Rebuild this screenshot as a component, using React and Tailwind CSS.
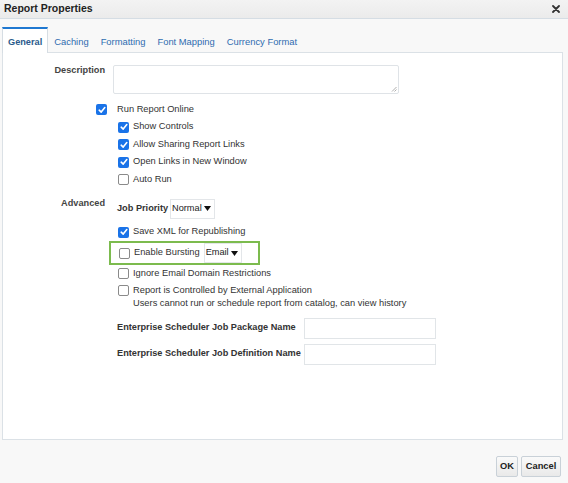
import React from "react"

const font = { fontFamily: '"Liberation Sans", Arial, sans-serif' }

function Check({ checked }) {
  if (checked) {
    return (
      <span className="flex h-[11px] w-[11px] shrink-0 items-center justify-center rounded-[2px] bg-[#1a73e8]">
        <svg width="8" height="8" viewBox="0 0 8 8" fill="none">
          <path d="M1.2 4.2 L3.2 6.1 L6.8 1.6" stroke="white" strokeWidth="1.6" strokeLinecap="round" strokeLinejoin="round" />
        </svg>
      </span>
    )
  }
  return <span className="block h-[11px] w-[11px] shrink-0 rounded-[2px] border border-[#8a8a8a] bg-white" />
}

function CheckRow({ checked, label, indent }) {
  return (
    <div className={`flex h-[17.5px] items-center ${indent ? "pl-[5px]" : ""}`}>
      <Check checked={checked} />
      <span className="ml-[4px] whitespace-nowrap text-[9.3px] text-[#333]">{label}</span>
    </div>
  )
}

function Select({ value }) {
  return (
    <span className="flex h-[20px] items-center border border-[#e3e6e9] bg-white pl-[1px] pr-[3px] text-[9.2px] text-[#222]">
      {value}
      <svg className="ml-[2px]" width="7" height="5" viewBox="0 0 7 5">
        <path d="M0 0 H7 L3.5 5 Z" fill="#111" />
      </svg>
    </span>
  )
}

export default function App() {
  const tabs = ["Caching", "Formatting", "Font Mapping", "Currency Format"]

  return (
    <div className="flex h-[483px] w-[568px] flex-col bg-[#f8f8f8]" style={font}>
      {/* Title bar */}
      <div className="flex h-[19px] items-center justify-between border-b border-[#d5dde4] bg-gradient-to-b from-[#f3f3f3] to-[#ebebeb] pl-[4px] pr-[8px]">
        <span className="text-[10.5px] font-bold text-[#222]">Report Properties</span>
        <svg width="8" height="8" viewBox="0 0 8 8">
          <path d="M1 1 L7 7 M7 1 L1 7" stroke="#333" strokeWidth="1.8" strokeLinecap="round" />
        </svg>
      </div>

      {/* Tabs */}
      <div className="mt-[8px] flex h-[25px] pl-[2px]">
        <div className="relative z-10 -mb-px flex items-center border-x border-t-2 border-x-[#d6dde3] border-t-[#1f78d1] bg-white px-[5px] pt-[4px] text-[9.2px] font-bold text-[#2b5b8c]">
          General
        </div>
        {tabs.map((t) => (
          <div key={t} className="flex items-center px-[6px] pt-[6px] text-[9.4px] text-[#2f6cb0]">
            {t}
          </div>
        ))}
      </div>

      {/* Panel */}
      <div className="ml-[2px] mr-[5px] h-[388px] border border-[#dbe1e6] bg-white pt-[12px]">
        {/* Description */}
        <div className="flex">
          <div className="w-[102px] text-right text-[9.2px] font-bold leading-[11px] text-[#444]">Description</div>
          <div className="relative ml-[8px] h-[29px] w-[286px] rounded-[2px] border border-[#dfe3e7] bg-white">
            <svg className="absolute bottom-[1px] right-[1px]" width="6" height="6" viewBox="0 0 6 6">
              <path d="M5.5 1 L1 5.5 M5.5 3.5 L3.5 5.5" stroke="#999" strokeWidth="0.8" />
            </svg>
          </div>
        </div>

        {/* Run report online */}
        <div className="mt-[7px] flex h-[17.5px] items-center">
          <div className="flex w-[104px] justify-end">
            <Check checked />
          </div>
          <span className="ml-[10px] text-[9.3px] text-[#333]">Run Report Online</span>
        </div>
        <div className="ml-[110px]">
          <CheckRow checked indent label="Show Controls" />
          <CheckRow checked indent label="Allow Sharing Report Links" />
          <CheckRow checked indent label="Open Links in New Window" />
          <CheckRow indent label="Auto Run" />
        </div>

        {/* Advanced */}
        <div className="mt-[10px] flex">
          <div className="-mt-[1px] w-[102px] text-right text-[9.2px] font-bold leading-[11px] text-[#444]">Advanced</div>
          <div className="ml-[8px] flex-1">
            <div className="flex h-[20px] items-center pl-[4px]">
              <span className="mr-[2px] text-[9.2px] font-bold text-[#333]">Job Priority</span>
              <Select value="Normal" />
            </div>
            <div className="mt-[5px]">
              <CheckRow checked indent label="Save XML for Republishing" />
            </div>
          </div>
        </div>

        <div className="ml-[106px] flex h-[24px] w-[151px] items-center border-2 border-[#7cbb4e] pl-[8px]">
          <Check />
          <span className="ml-[4px] mr-[4px] text-[9.3px] text-[#333]">Enable Bursting</span>
          <Select value="Email" />
        </div>

        <div className="ml-[110px]">
          <CheckRow indent label="Ignore Email Domain Restrictions" />
          <div className="flex items-start pl-[5px] pt-[1px]">
            <div className="pt-[1px]">
              <Check />
            </div>
            <div className="ml-[4px] text-[9.3px] leading-[13px] text-[#333]">
              <div>Report is Controlled by External Application</div>
              <div>Users cannot run or schedule report from catalog, can view history</div>
            </div>
          </div>
        </div>

        {/* Scheduler fields */}
        <div className="ml-[114px] mt-[8px] flex flex-col gap-[5px]">
          <div className="flex items-center">
            <span className="w-[187px] whitespace-nowrap text-[9.2px] font-bold text-[#333]">Enterprise Scheduler Job Package Name</span>
            <div className="h-[21px] w-[132px] border border-[#e1e5e8] bg-white" />
          </div>
          <div className="flex items-center">
            <span className="w-[187px] whitespace-nowrap text-[9.2px] font-bold text-[#333]">Enterprise Scheduler Job Definition Name</span>
            <div className="h-[21px] w-[132px] border border-[#e1e5e8] bg-white" />
          </div>
        </div>
      </div>

      {/* Footer */}
      <div className="mt-[16px] flex justify-end gap-[3px] pr-[7px]">
        <button className="h-[21px] w-[22px] rounded-[2px] border border-[#c9d1d8] bg-gradient-to-b from-[#fafafa] to-[#e9e9e9] text-[9.3px] font-bold text-[#222]">
          OK
        </button>
        <button className="h-[21px] w-[40px] rounded-[2px] border border-[#c9d1d8] bg-gradient-to-b from-[#fafafa] to-[#e9e9e9] text-[9.3px] font-bold text-[#222]">
          Cancel
        </button>
      </div>
    </div>
  )
}
